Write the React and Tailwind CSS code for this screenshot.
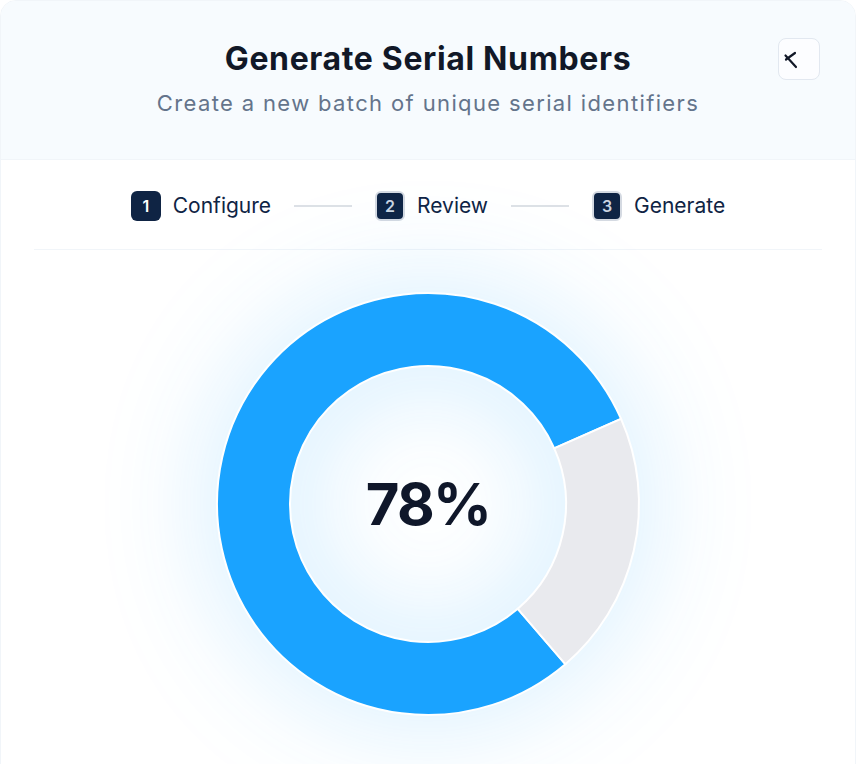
import React from 'react';

const CX = 215;
const CY = 215;
const R_OUT = 211;
const R_IN = 138;

// annular sector, angles in degrees (math convention, counter-clockwise)
const sector = (from, to) => {
  const rad = (a) => (a * Math.PI) / 180;
  const pt = (r, a) => [CX + r * Math.cos(rad(a)), CY - r * Math.sin(rad(a))];
  const large = Math.abs(to - from) > 180 ? 1 : 0;
  const [x1, y1] = pt(R_OUT, from);
  const [x2, y2] = pt(R_OUT, to);
  const [x3, y3] = pt(R_IN, to);
  const [x4, y4] = pt(R_IN, from);
  return `M${x1} ${y1} A${R_OUT} ${R_OUT} 0 ${large} 0 ${x2} ${y2} L${x3} ${y3} A${R_IN} ${R_IN} 0 ${large} 1 ${x4} ${y4} Z`;
};

const steps = [
  { n: 1, label: 'Configure', active: true },
  { n: 2, label: 'Review' },
  { n: 3, label: 'Generate' },
];

const Donut = ({ value }) => (
  <div className="relative w-[430px] h-[430px]">
    <svg
      width="430"
      height="430"
      viewBox="0 0 430 430"
      className="overflow-visible drop-shadow-[0_0_56px_rgba(26,163,255,0.22)]"
    >
      <path d={sector(23.8, 310.6)} fill="#1aa3ff" stroke="#ffffff" strokeWidth="2" />
      <path d={sector(-49.4, 23.8)} fill="#e9eaee" stroke="#ffffff" strokeWidth="2" />
    </svg>
    <div className="absolute inset-0 flex items-center justify-center">
      <span className="text-[58px] font-bold tracking-[-0.03em] text-[#0f172a] leading-none">{value}%</span>
    </div>
  </div>
);

export default function App() {
  return (
    <div className="min-h-screen bg-white font-['Inter',sans-serif]">
      <div className="w-full min-h-[780px] rounded-2xl border border-slate-100 overflow-hidden bg-white">
        <div className="relative bg-[#f7fbfe] border-b border-slate-100 pt-[40px] pb-[42px] text-center">
          <h1 className="text-[32px] leading-9 font-bold text-[#111827] tracking-[0.02em]">Generate Serial Numbers</h1>
          <p className="mt-3 text-[22px] leading-7 text-[#64748b] tracking-[0.062em]">Create a new batch of unique serial identifiers</p>
          <button className="absolute top-[37px] right-[35px] w-[42px] h-[42px] rounded-lg border border-slate-200 bg-white/60">
            <svg width="40" height="40" viewBox="0 0 40 40" className="text-[#111827]">
              <path d="M16 14 L7 20.5 M6.5 16.5 L17 28" stroke="currentColor" strokeWidth="2.2" strokeLinecap="round" fill="none" />
            </svg>
          </button>
        </div>

        <div className="pt-[31px] pb-[28px] mx-[33px] border-b border-slate-100 flex items-center justify-center gap-[23px]">
          {steps.map((s, i) => (
            <React.Fragment key={s.n}>
              {i > 0 && <div className="w-[58px] h-[2px] bg-[#dde1e6]" />}
              <div className="flex items-center gap-3">
                <span
                  className={
                    s.active
                      ? 'w-[30px] h-[30px] rounded-md bg-[#0f2444] text-white text-[16px] font-semibold flex items-center justify-center'
                      : 'w-[30px] h-[30px] rounded-md bg-[#0f2444] border-2 border-[#d5dae2] text-[#cbd5e1] text-[16px] font-semibold flex items-center justify-center'
                  }
                >
                  {s.n}
                </span>
                <span className="text-[21px] leading-[30px] text-[#0f2444]">{s.label}</span>
              </div>
            </React.Fragment>
          ))}
        </div>

        <div className="flex justify-center pt-[39px]">
          <Donut value={78} />
        </div>
      </div>
    </div>
  );
}
